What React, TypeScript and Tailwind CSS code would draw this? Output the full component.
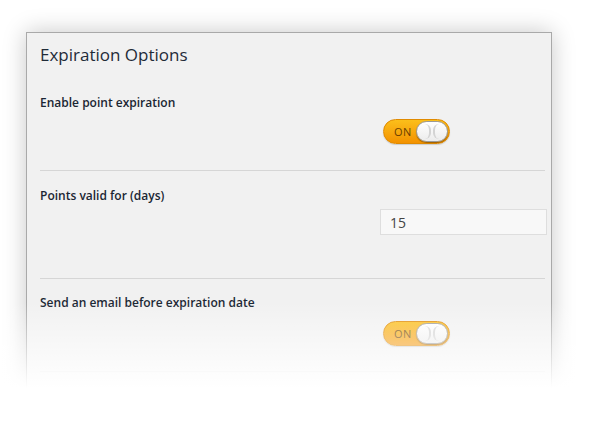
import React from "react";

const font = { fontFamily: '"Open Sans", "Noto Sans", sans-serif' };

function Toggle() {
  return (
    <div className="flex items-center w-[67px] h-[25px] rounded-full border border-[#e08a00] bg-gradient-to-b from-[#fbbf1a] to-[#f39200] shadow-[0_1px_1px_rgba(0,0,0,0.15)]">
      <span className="ml-[10px] text-[11px] tracking-[0.5px] text-[#6b3f00] leading-none">ON</span>
      <div className="ml-auto mr-[1px] flex items-center justify-center gap-[2px] w-[32px] h-[21px] rounded-full bg-gradient-to-b from-white to-[#ececec] border border-[#9a9a9a] shadow-[0_1px_1px_rgba(0,0,0,0.35)]">
        <span className="w-[6px] h-[15px] rounded-r-full border-r-2 border-[#d4d4d4]" />
        <span className="w-[6px] h-[15px] rounded-l-full border-l-2 border-[#d4d4d4]" />
      </div>
    </div>
  );
}

export default function App() {
  return (
    <div className="relative w-[600px] h-[434px] bg-white overflow-hidden" style={font}>
      <div className="ml-[26px] mt-[32px] w-[526px] h-[362px] bg-[#f1f1f1] border border-[#a9a9a9] shadow-[0_0_22px_rgba(0,0,0,0.22)]">
        <div className="pl-[13px] pr-[6px]">
          <h1 className="pt-[9px] text-[17px] leading-[26px] text-[#1f2b38]">Expiration Options</h1>

          {/* Row 1 */}
          <div className="mt-[26px] h-[77px] border-b border-[#d6d6d6]">
            <div className="text-[12px] font-semibold leading-[18px] text-[#1a2633]">Enable point expiration</div>
            <div className="mt-[7px] pl-[343px]">
              <Toggle />
            </div>
          </div>

          {/* Row 2 */}
          <div className="h-[108px] border-b border-[#d6d6d6]">
            <div className="pt-[16px] text-[12px] font-semibold leading-[18px] text-[#1a2633]">Points valid for (days)</div>
            <div className="mt-[4px] pl-[340px]">
              <div className="w-[167px] h-[26px] mr-[-6px] flex items-center pl-[9px] bg-[#f8f8f8] border border-[#dedede] text-[14px] text-[#444]">
                15
              </div>
            </div>
          </div>

          {/* Row 3 */}
          <div className="h-[93px] border-b border-[#e2e2e2]">
            <div className="pt-[15px] text-[12px] font-semibold leading-[18px] text-[#1a2633]">Send an email before expiration date</div>
            <div className="mt-[9px] pl-[343px]">
              <Toggle />
            </div>
          </div>
        </div>
      </div>

      {/* bottom fade */}
      <div className="absolute left-0 right-0 top-[302px] h-[86px] bg-gradient-to-b from-white/0 to-white" />
      <div className="absolute left-0 right-0 top-[388px] bottom-0 bg-white" />
    </div>
  );
}
